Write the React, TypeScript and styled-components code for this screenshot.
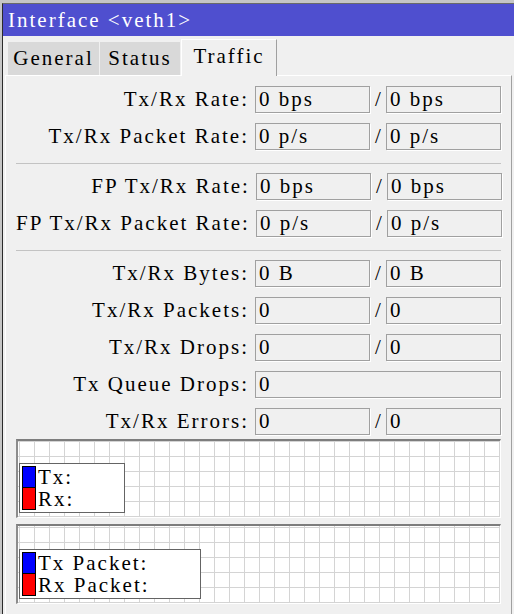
import styled, { createGlobalStyle } from 'styled-components';

const GlobalStyle = createGlobalStyle`
  html, body {
    margin: 0;
    padding: 0;
    background: #c6c6c6;
  }
  body {
    font-family: "Liberation Serif", "DejaVu Serif", serif;
    font-size: 21px;
    letter-spacing: 2px;
    color: #000;
  }
  * { box-sizing: border-box; }
`;

const Screen = styled.div`
  width: 514px;
  height: 614px;
  overflow: hidden;
  padding: 3px 0 0 2px;
  background: #c6c6c6;
`;

const Window = styled.div`
  height: 100%;
  border-left: 1px solid #2b2b2b;
  border-top: 1px solid #6a6a6a;
  background: #f0f0f0;
  display: flex;
  flex-direction: column;
`;

const TitleBar = styled.div`
  height: 32px;
  flex: none;
  background: #4f4fcf;
  color: #fff;
  padding-left: 5px;
  display: flex;
  align-items: center;
  white-space: pre;
`;

const TabStrip = styled.div`
  display: flex;
  align-items: flex-end;
  height: 39px;
  padding-left: 5px;
  flex: none;
`;

const Tab = styled.div<{ $w: number; $active?: boolean }>`
  width: ${(p) => p.$w}px;
  height: ${(p) => (p.$active ? 37 : 33)}px;
  display: flex;
  align-items: center;
  justify-content: center;
  padding-bottom: ${(p) => (p.$active ? 4 : 0)}px;
  background: ${(p) => (p.$active ? '#f0f0f0' : '#d9d9d9')};
  border-right: 1px solid ${(p) => (p.$active ? '#a0a0a0' : '#f0f0f0')};
  border-top: ${(p) => (p.$active ? '1px solid #fff' : 'none')};
  border-left: ${(p) => (p.$active ? '1px solid #fff' : 'none')};
  margin-bottom: ${(p) => (p.$active ? -1 : 0)}px;
  position: relative;
  z-index: ${(p) => (p.$active ? 1 : 0)};
`;

const Panel = styled.div`
  flex: 1;
  margin: 0 2px 0 2px;
  border-top: 1px solid #fff;
  border-left: 1px solid #fff;
  border-right: 1px solid #a0a0a0;
  padding: 10px 10px 0 10px;
  display: flex;
  flex-direction: column;
`;

const Rows = styled.div`
  display: grid;
  grid-template-columns: 1fr 115px 16px 115px;
  grid-auto-rows: 27px;
  row-gap: 10px;
`;

const Label = styled.div`
  padding-right: 6px;
  display: flex;
  align-items: center;
  justify-content: flex-end;
  white-space: pre;
`;

const Field = styled.div<{ $wide?: boolean }>`
  grid-column: ${(p) => (p.$wide ? 'span 3' : 'auto')};
  border: 1px solid #a0a0a0;
  box-shadow: 1px 1px 0 #fff;
  background: #f0f0f0;
  padding-left: 3px;
  display: flex;
  align-items: center;
  white-space: pre;
`;

const Slash = styled.div`
  display: flex;
  align-items: center;
  justify-content: center;
  letter-spacing: 0;
`;

const Separator = styled.div`
  height: 1px;
  background: #c3c3c3;
  margin: 13px 0 9px;
`;

const Graph = styled.div<{ $h: number; $top: number }>`
  height: ${(p) => p.$h}px;
  margin-top: ${(p) => p.$top}px;
  border-top: 2px solid #7d7d7d;
  border-left: 2px solid #8c8c8c;
  border-right: 1px solid #fff;
  border-bottom: 1px solid #fff;
  background-color: #fff;
  background-image: linear-gradient(to left, #d4d4d4 1px, transparent 1px),
    linear-gradient(to top, #d4d4d4 1px, transparent 1px);
  background-size: 15px 15px;
  background-position: right bottom;
  display: flex;
  align-items: flex-end;
  padding: 0 0 4px 1px;
`;

const Legend = styled.div`
  background: #fff;
  border: 1px solid #646464;
  padding: 2px 50px 2px 2px;
  display: flex;
  flex-direction: column;
`;

const LegendRow = styled.div`
  display: flex;
  align-items: center;
  height: 22px;
  white-space: pre;
`;

const Swatch = styled.span<{ $color: string; $first?: boolean }>`
  width: 14px;
  height: 22px;
  background: ${(p) => p.$color};
  border: 1px solid #000;
  border-top-width: ${(p) => (p.$first ? 1 : 0)}px;
  margin-right: 2px;
  flex: none;
`;

type Row = { label: string; a: string; b?: string };

const section1: Row[] = [
  { label: 'Tx/Rx Rate:', a: '0 bps', b: '0 bps' },
  { label: 'Tx/Rx Packet Rate:', a: '0 p/s', b: '0 p/s' },
];
const section2: Row[] = [
  { label: 'FP Tx/Rx Rate:', a: '0 bps', b: '0 bps' },
  { label: 'FP Tx/Rx Packet Rate:', a: '0 p/s', b: '0 p/s' },
];
const section3: Row[] = [
  { label: 'Tx/Rx Bytes:', a: '0 B', b: '0 B' },
  { label: 'Tx/Rx Packets:', a: '0', b: '0' },
  { label: 'Tx/Rx Drops:', a: '0', b: '0' },
  { label: 'Tx Queue Drops:', a: '0' },
  { label: 'Tx/Rx Errors:', a: '0', b: '0' },
];

function Section({ rows }: { rows: Row[] }) {
  return (
    <Rows>
      {rows.map((r) => [
        <Label key={r.label + 'l'}>{r.label}</Label>,
        r.b === undefined ? (
          <Field key={r.label + 'a'} $wide>{r.a}</Field>
        ) : (
          [
            <Field key={r.label + 'a'}>{r.a}</Field>,
            <Slash key={r.label + 's'}>/</Slash>,
            <Field key={r.label + 'b'}>{r.b}</Field>,
          ]
        ),
      ])}
    </Rows>
  );
}

function TrafficGraph({ h, top, tx, rx }: { h: number; top: number; tx: string; rx: string }) {
  return (
    <Graph $h={h} $top={top}>
      <Legend>
        <LegendRow>
          <Swatch $color="#0000ff" $first />
          {tx}
        </LegendRow>
        <LegendRow>
          <Swatch $color="#ff0000" />
          {rx}
        </LegendRow>
      </Legend>
    </Graph>
  );
}

export default function App() {
  return (
    <Screen>
      <GlobalStyle />
      <Window>
        <TitleBar>Interface &lt;veth1&gt;</TitleBar>
        <TabStrip>
          <Tab $w={92}>General</Tab>
          <Tab $w={81}>Status</Tab>
          <Tab $w={96} $active>Traffic</Tab>
        </TabStrip>
        <Panel>
          <Section rows={section1} />
          <Separator />
          <Section rows={section2} />
          <Separator />
          <Section rows={section3} />
          <TrafficGraph h={79} top={4} tx="Tx:" rx="Rx:" />
          <TrafficGraph h={80} top={6} tx="Tx Packet:" rx="Rx Packet:" />
        </Panel>
      </Window>
    </Screen>
  );
}
